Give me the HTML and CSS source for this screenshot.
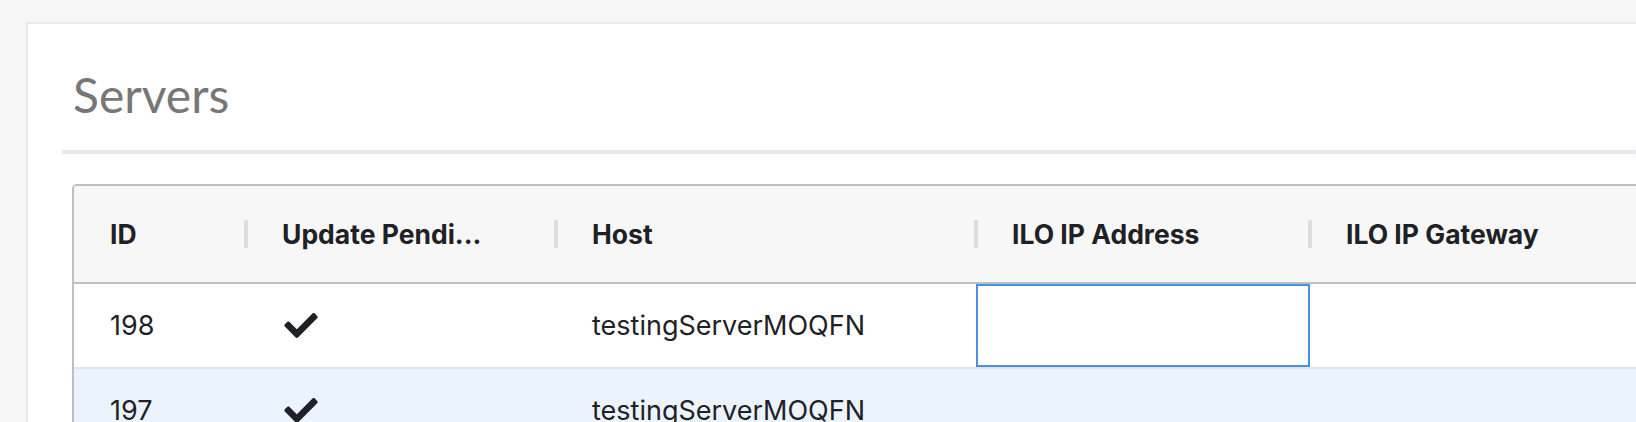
FILE: index.html
```html
<!DOCTYPE html>
<html lang="en">
<head>
<meta charset="utf-8">
<title>Servers</title>
<link rel="stylesheet" href="styles.css">
</head>
<body>
<main class="card">
  <header class="page-head">
    <h1 class="page-title">Servers</h1>
  </header>
  <div class="grid">
    <div class="grid-row grid-head">
      <div class="hcell">ID</div>
      <div class="hcell sep">Update Pendi...</div>
      <div class="hcell sep">Host</div>
      <div class="hcell sep">ILO IP Address</div>
      <div class="hcell sep">ILO IP Gateway</div>
    </div>
    <div class="grid-row body-row">
      <div class="cell">198</div>
      <div class="cell"><svg class="check" viewBox="0 64 512 384" aria-hidden="true"><path d="M173.898 439.404l-166.4-166.4c-9.997-9.997-9.997-26.206 0-36.204l36.203-36.204c9.997-9.998 26.207-9.998 36.204 0L192 312.69 432.095 72.596c9.997-9.997 26.207-9.997 36.204 0l36.203 36.204c9.997 9.997 9.997 26.206 0 36.204l-294.4 294.401c-9.998 9.997-26.207 9.997-36.204-.001z"/></svg></div>
      <div class="cell">testingServerMOQFN</div>
      <div class="cell focused"></div>
      <div class="cell"></div>
    </div>
    <div class="grid-row body-row hover">
      <div class="cell">197</div>
      <div class="cell"><svg class="check" viewBox="0 64 512 384" aria-hidden="true"><path d="M173.898 439.404l-166.4-166.4c-9.997-9.997-9.997-26.206 0-36.204l36.203-36.204c9.997-9.998 26.207-9.998 36.204 0L192 312.69 432.095 72.596c9.997-9.997 26.207-9.997 36.204 0l36.203 36.204c9.997 9.997 9.997 26.206 0 36.204l-294.4 294.401c-9.998 9.997-26.207 9.997-36.204-.001z"/></svg></div>
      <div class="cell">testingServerMOQFN</div>
      <div class="cell"></div>
      <div class="cell"></div>
    </div>
  </div>
</main>
</body>
</html>
```
FILE: styles.css
```css
html, body {
  margin: 0;
  padding: 0;
  overflow: hidden;
  background: #f6f6f6;
}

body {
  font-family: Inter, "Noto Sans", sans-serif;
  color: #1f2327;
}

.card {
  margin: 22px -80px 0 26px;
  padding: 41px 0 200px 34px;
  background: #ffffff;
  border: 2px solid #e8e9ec;
}

.page-head {
  border-bottom: 4px solid #e8e9ec;
  padding: 0 0 25px 11px;
}

.page-title {
  margin: 0;
  font-family: Lato, "Open Sans", sans-serif;
  font-weight: 400;
  font-size: 48px;
  line-height: 60px;
  color: #777777;
}

.grid {
  margin: 30px 0 0 10px;
  border: 2px solid #bcc0c5;
  border-radius: 5px;
  overflow: hidden;
  background: #ffffff;
}

.grid-row {
  display: grid;
  grid-template-columns: 172px 310px 420px 334px 420px;
}

.grid-head {
  height: 96px;
  background: #f7f7f7;
  border-bottom: 2px solid #bcc0c5;
}

.hcell {
  position: relative;
  display: flex;
  align-items: center;
  padding-left: 36px;
  font-weight: 700;
  font-size: 26.5px;
  color: #1e2125;
  white-space: nowrap;
}

.hcell.sep::before {
  content: "";
  position: absolute;
  left: -2px;
  top: 34px;
  width: 4px;
  height: 28px;
  background: #dcdde0;
}

.body-row {
  height: 83px;
  border-bottom: 2px solid #e0e4e9;
}

.body-row.hover {
  background: #ebf3fd;
}

.cell {
  display: flex;
  align-items: center;
  padding-left: 36px;
  font-size: 27px;
  color: #1e2226;
  white-space: nowrap;
}

.cell.focused {
  box-shadow: inset 0 0 0 2px #4a90e2;
}

.check {
  width: 34px;
  height: 25px;
  margin-left: 2px;
  fill: #1e2226;
}
```
